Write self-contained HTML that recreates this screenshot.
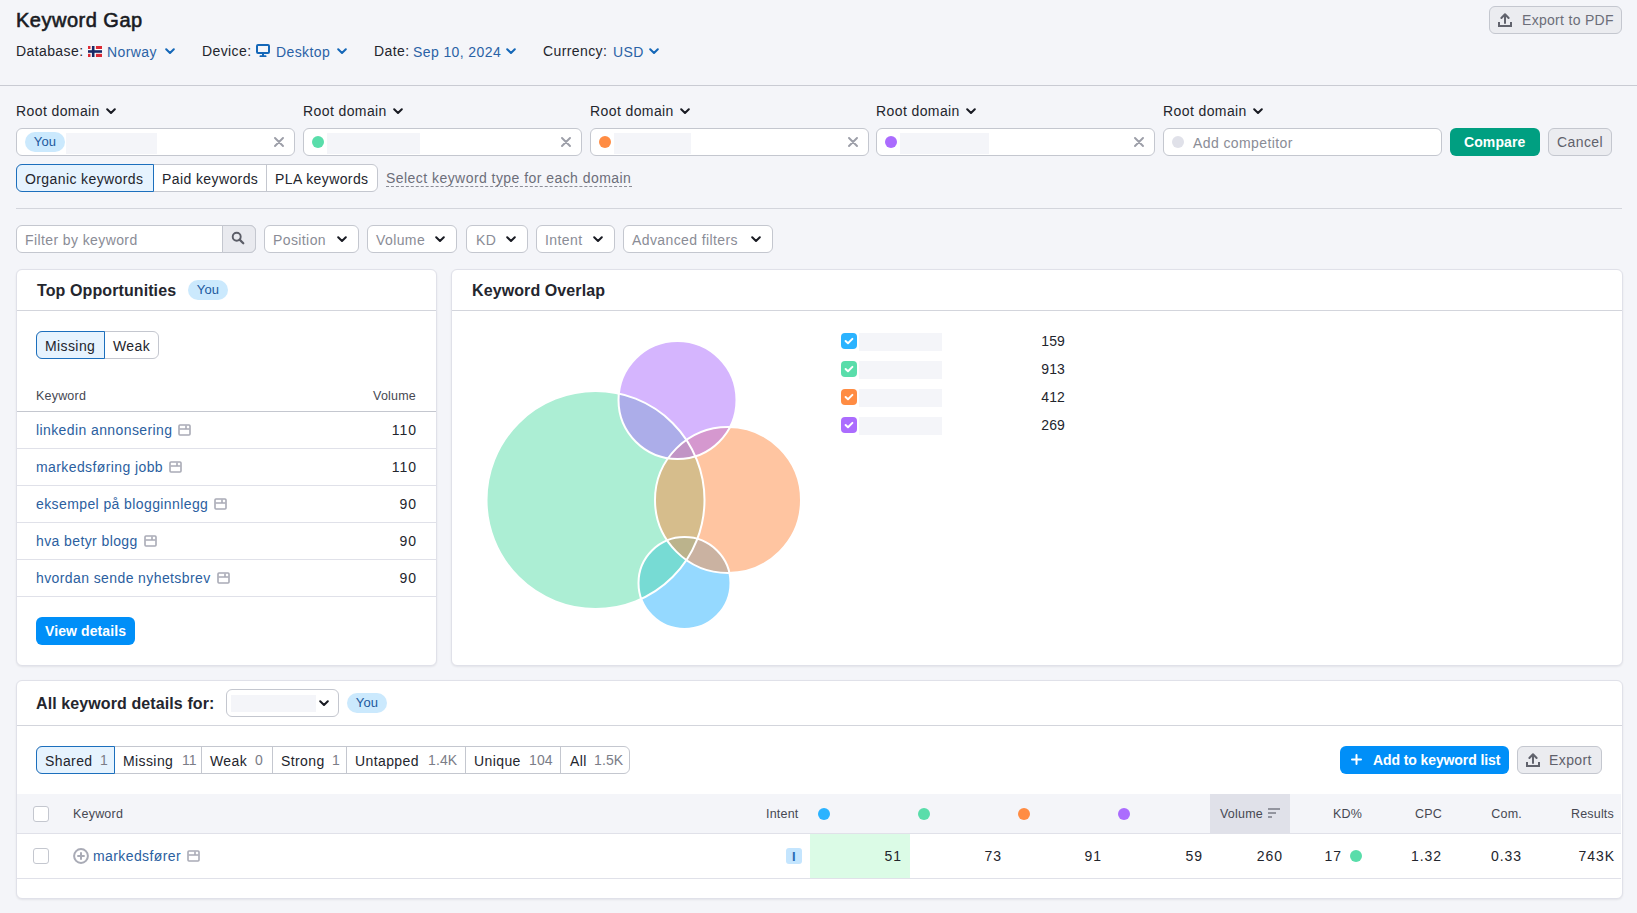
<!DOCTYPE html>
<html><head><meta charset="utf-8">
<style>
*{box-sizing:border-box;margin:0;padding:0}
html,body{width:1637px;height:913px;overflow:hidden;background:#f4f5f9;font-family:"Liberation Sans",sans-serif;color:#23252d;font-size:14px}
.a{position:absolute;white-space:nowrap}
.t14{font-size:14px;line-height:20px;letter-spacing:0.4px}
.lnk{color:#2b62a6}
.title{left:16px;top:7px;font-size:20px;font-weight:normal;-webkit-text-stroke:0.6px #191b23;letter-spacing:0.5px;line-height:26px;color:#191b23}
.hr{height:1px;background:#c9cbd3}
.inp{height:28px;width:279px;background:#fff;border:1px solid #c4c7cf;border-radius:6px}
.badge{height:20px;width:40px;border-radius:10px;background:#cbe9fd;color:#21599e;font-size:13px;line-height:20px;text-align:center;letter-spacing:0.2px}
.gbar{background:#f4f5f9}
.dot{width:12px;height:12px;border-radius:50%}
.card{background:#fff;border:1px solid #e0e1e9;border-radius:6px;box-shadow:0 1px 2px rgba(25,27,35,0.08)}
.fbox{height:28px;background:#fff;border:1px solid #c4c7cf;border-radius:6px}
.ph{color:#8a8c96}
.sec{color:#6c6e79}
.hdr{font-size:16px;font-weight:bold;line-height:20px;letter-spacing:0.1px;color:#24262e}
.kw{color:#2b60a0}
.num{text-align:right;letter-spacing:0.9px!important;margin-right:-0.9px}
.th{font-size:12.5px;line-height:16px;color:#464852;letter-spacing:0.2px}
</style></head>
<body>

<div class="a title">Keyword Gap</div>
<div class="a t14" style="left:16px;top:41px;">Database:</div>
<svg class="a" style="left:88px;top:46px" width="14" height="11" viewBox="0 0 14 11"><rect width="14" height="11" fill="#dc2a35"/><rect x="2.5" width="5.4" height="11" fill="#fff"/><rect y="3" width="14" height="4.8" fill="#fff"/><rect x="3.9" width="2.6" height="11" fill="#1a2a66"/><rect y="4.2" width="14" height="2.6" fill="#1a2a66"/></svg>
<div class="a t14 lnk" style="left:107px;top:42px;">Norway</div>
<svg class="a" style="left:165px;top:48px" width="10" height="7" viewBox="0 0 10 7"><path d="M1.2 1.2 L5 5 L8.8 1.2" fill="none" stroke="#1467b8" stroke-width="2" stroke-linecap="round" stroke-linejoin="round"/></svg>
<div class="a t14" style="left:202px;top:41px;">Device:</div>
<svg class="a" style="left:256px;top:44px" width="14" height="13" viewBox="0 0 14 13"><rect x="1" y="1" width="12" height="8" rx="1" fill="none" stroke="#1467b8" stroke-width="2"/><rect x="6" y="9" width="2" height="3.5" fill="#1467b8"/><rect x="3.5" y="11.3" width="7" height="1.9" rx="0.9" fill="#1467b8"/></svg>
<div class="a t14 lnk" style="left:276px;top:42px;">Desktop</div>
<svg class="a" style="left:337px;top:48px" width="10" height="7" viewBox="0 0 10 7"><path d="M1.2 1.2 L5 5 L8.8 1.2" fill="none" stroke="#1467b8" stroke-width="2" stroke-linecap="round" stroke-linejoin="round"/></svg>
<div class="a t14" style="left:374px;top:41px;">Date:</div>
<div class="a t14 lnk" style="left:413px;top:42px;">Sep 10, 2024</div>
<svg class="a" style="left:506px;top:48px" width="10" height="7" viewBox="0 0 10 7"><path d="M1.2 1.2 L5 5 L8.8 1.2" fill="none" stroke="#1467b8" stroke-width="2" stroke-linecap="round" stroke-linejoin="round"/></svg>
<div class="a t14" style="left:543px;top:41px;">Currency:</div>
<div class="a t14 lnk" style="left:613px;top:42px;">USD</div>
<svg class="a" style="left:649px;top:48px" width="10" height="7" viewBox="0 0 10 7"><path d="M1.2 1.2 L5 5 L8.8 1.2" fill="none" stroke="#1467b8" stroke-width="2" stroke-linecap="round" stroke-linejoin="round"/></svg>
<div class="a" style="left:1489px;top:6px;width:133px;height:28px;border:1px solid #c4c7cf;border-radius:6px;background:#ebecf0"></div>
<svg class="a" style="left:1498px;top:13px" width="14" height="14" viewBox="0 0 14 14"><path d="M7 10 V1.6 M3.4 5 L7 1.3 L10.6 5" fill="none" stroke="#61636d" stroke-width="2" stroke-linecap="round" stroke-linejoin="round"/><path d="M1 9 V13 H13 V9" fill="none" stroke="#61636d" stroke-width="2"/></svg>
<div class="a t14 sec" style="left:1522px;top:10px;letter-spacing:0.3px">Export to PDF</div>
<div class="a" style="left:0px;top:85px;width:1637px;height:1px;background:#c9cbd3"></div>
<div class="a t14" style="left:16px;top:101px;">Root domain</div>
<svg class="a" style="left:106px;top:108px" width="10" height="7" viewBox="0 0 10 7"><path d="M1.2 1.2 L5 5 L8.8 1.2" fill="none" stroke="#191b23" stroke-width="2" stroke-linecap="round" stroke-linejoin="round"/></svg>
<div class="a" style="left:16px;top:128px;width:279px;height:28px;background:#fff;border:1px solid #c4c7cf;border-radius:6px"></div>
<div class="a badge" style="left:25px;top:132px">You</div>
<div class="a" style="left:66px;top:133px;width:91px;height:21px;background:#f4f5f9"></div>
<svg class="a" style="left:274px;top:137px" width="10" height="10" viewBox="0 0 10 10"><path d="M1 1 L9 9 M9 1 L1 9" stroke="#9c9ea8" stroke-width="1.9" stroke-linecap="round"/></svg>
<div class="a t14" style="left:303px;top:101px;">Root domain</div>
<svg class="a" style="left:393px;top:108px" width="10" height="7" viewBox="0 0 10 7"><path d="M1.2 1.2 L5 5 L8.8 1.2" fill="none" stroke="#191b23" stroke-width="2" stroke-linecap="round" stroke-linejoin="round"/></svg>
<div class="a" style="left:303px;top:128px;width:279px;height:28px;background:#fff;border:1px solid #c4c7cf;border-radius:6px"></div>
<div class="a" style="left:312px;top:136px;width:12px;height:12px;border-radius:50%;background:#59ddaa"></div>
<div class="a" style="left:327px;top:133px;width:93px;height:21px;background:#f4f5f9"></div>
<svg class="a" style="left:561px;top:137px" width="10" height="10" viewBox="0 0 10 10"><path d="M1 1 L9 9 M9 1 L1 9" stroke="#9c9ea8" stroke-width="1.9" stroke-linecap="round"/></svg>
<div class="a t14" style="left:590px;top:101px;">Root domain</div>
<svg class="a" style="left:680px;top:108px" width="10" height="7" viewBox="0 0 10 7"><path d="M1.2 1.2 L5 5 L8.8 1.2" fill="none" stroke="#191b23" stroke-width="2" stroke-linecap="round" stroke-linejoin="round"/></svg>
<div class="a" style="left:590px;top:128px;width:279px;height:28px;background:#fff;border:1px solid #c4c7cf;border-radius:6px"></div>
<div class="a" style="left:599px;top:136px;width:12px;height:12px;border-radius:50%;background:#ff8c43"></div>
<div class="a" style="left:614px;top:133px;width:77px;height:21px;background:#f4f5f9"></div>
<svg class="a" style="left:848px;top:137px" width="10" height="10" viewBox="0 0 10 10"><path d="M1 1 L9 9 M9 1 L1 9" stroke="#9c9ea8" stroke-width="1.9" stroke-linecap="round"/></svg>
<div class="a t14" style="left:876px;top:101px;">Root domain</div>
<svg class="a" style="left:966px;top:108px" width="10" height="7" viewBox="0 0 10 7"><path d="M1.2 1.2 L5 5 L8.8 1.2" fill="none" stroke="#191b23" stroke-width="2" stroke-linecap="round" stroke-linejoin="round"/></svg>
<div class="a" style="left:876px;top:128px;width:279px;height:28px;background:#fff;border:1px solid #c4c7cf;border-radius:6px"></div>
<div class="a" style="left:885px;top:136px;width:12px;height:12px;border-radius:50%;background:#ab6cfe"></div>
<div class="a" style="left:900px;top:133px;width:89px;height:21px;background:#f4f5f9"></div>
<svg class="a" style="left:1134px;top:137px" width="10" height="10" viewBox="0 0 10 10"><path d="M1 1 L9 9 M9 1 L1 9" stroke="#9c9ea8" stroke-width="1.9" stroke-linecap="round"/></svg>
<div class="a t14" style="left:1163px;top:101px;">Root domain</div>
<svg class="a" style="left:1253px;top:108px" width="10" height="7" viewBox="0 0 10 7"><path d="M1.2 1.2 L5 5 L8.8 1.2" fill="none" stroke="#191b23" stroke-width="2" stroke-linecap="round" stroke-linejoin="round"/></svg>
<div class="a" style="left:1163px;top:128px;width:279px;height:28px;background:#fff;border:1px solid #c4c7cf;border-radius:6px"></div>
<div class="a" style="left:1172px;top:136px;width:12px;height:12px;border-radius:50%;background:#e0e1e9"></div>
<div class="a t14 ph" style="left:1193px;top:133px;">Add competitor</div>
<div class="a" style="left:1450px;top:128px;width:90px;height:28px;background:#009f81;border-radius:6px"></div>
<div class="a t14" style="left:1464px;top:132px;color:#fff;font-weight:bold;letter-spacing:0.1px">Compare</div>
<div class="a" style="left:1548px;top:128px;width:64px;height:28px;background:#ebecf0;border:1px solid #c4c7cf;border-radius:6px"></div>
<div class="a t14 sec" style="left:1557px;top:132px;color:#5f616b">Cancel</div>
<div class="a" style="left:16px;top:164px;width:362px;height:28px;background:#fff;border:1px solid #c4c7cf;border-radius:6px"></div>
<div class="a" style="left:16px;top:164px;width:138px;height:28px;background:#e6f3fe;border:1px solid #1c6fbd;border-radius:6px 0 0 6px"></div>
<div class="a" style="left:266px;top:165px;width:1px;height:26px;background:#c4c7cf"></div>
<div class="a t14" style="left:25px;top:169px;">Organic keywords</div>
<div class="a t14" style="left:162px;top:169px;">Paid keywords</div>
<div class="a t14" style="left:275px;top:169px;">PLA keywords</div>
<div class="a t14 sec" style="left:386px;top:168px;letter-spacing:0.45px">Select keyword type for each domain</div>
<div class="a" style="left:386px;top:186px;width:246px;height:1px;border-top:1px dashed #8a8c96"></div>
<div class="a" style="left:16px;top:208px;width:1606px;height:1px;background:#d3d5dc"></div>
<div class="a" style="left:16px;top:225px;width:240px;height:28px;background:#fff;border:1px solid #c4c7cf;border-radius:6px"></div>
<div class="a" style="left:222px;top:225px;width:34px;height:28px;background:#e9eaef;border:1px solid #c4c7cf;border-radius:0 6px 6px 0"></div>
<svg class="a" style="left:231px;top:231px" width="14" height="14" viewBox="0 0 14 14"><circle cx="5.7" cy="5.7" r="4" fill="none" stroke="#5b5d67" stroke-width="1.9"/><path d="M8.6 8.6 L12.3 12.3" stroke="#5b5d67" stroke-width="2.2" stroke-linecap="round"/></svg>
<div class="a t14 ph" style="left:25px;top:230px;">Filter by keyword</div>
<div class="a" style="left:264px;top:225px;width:95px;height:28px;background:#fff;border:1px solid #c4c7cf;border-radius:6px"></div>
<div class="a t14 ph" style="left:273px;top:230px;">Position</div>
<svg class="a" style="left:337px;top:236px" width="10" height="7" viewBox="0 0 10 7"><path d="M1.2 1.2 L5 5 L8.8 1.2" fill="none" stroke="#191b23" stroke-width="2" stroke-linecap="round" stroke-linejoin="round"/></svg>
<div class="a" style="left:367px;top:225px;width:90px;height:28px;background:#fff;border:1px solid #c4c7cf;border-radius:6px"></div>
<div class="a t14 ph" style="left:376px;top:230px;">Volume</div>
<svg class="a" style="left:435px;top:236px" width="10" height="7" viewBox="0 0 10 7"><path d="M1.2 1.2 L5 5 L8.8 1.2" fill="none" stroke="#191b23" stroke-width="2" stroke-linecap="round" stroke-linejoin="round"/></svg>
<div class="a" style="left:466px;top:225px;width:62px;height:28px;background:#fff;border:1px solid #c4c7cf;border-radius:6px"></div>
<div class="a t14 ph" style="left:476px;top:230px;">KD</div>
<svg class="a" style="left:506px;top:236px" width="10" height="7" viewBox="0 0 10 7"><path d="M1.2 1.2 L5 5 L8.8 1.2" fill="none" stroke="#191b23" stroke-width="2" stroke-linecap="round" stroke-linejoin="round"/></svg>
<div class="a" style="left:536px;top:225px;width:79px;height:28px;background:#fff;border:1px solid #c4c7cf;border-radius:6px"></div>
<div class="a t14 ph" style="left:545px;top:230px;">Intent</div>
<svg class="a" style="left:593px;top:236px" width="10" height="7" viewBox="0 0 10 7"><path d="M1.2 1.2 L5 5 L8.8 1.2" fill="none" stroke="#191b23" stroke-width="2" stroke-linecap="round" stroke-linejoin="round"/></svg>
<div class="a" style="left:623px;top:225px;width:150px;height:28px;background:#fff;border:1px solid #c4c7cf;border-radius:6px"></div>
<div class="a t14 ph" style="left:632px;top:230px;">Advanced filters</div>
<svg class="a" style="left:751px;top:236px" width="10" height="7" viewBox="0 0 10 7"><path d="M1.2 1.2 L5 5 L8.8 1.2" fill="none" stroke="#191b23" stroke-width="2" stroke-linecap="round" stroke-linejoin="round"/></svg>
<div class="a" style="left:16px;top:269px;width:421px;height:397px;background:#fff;border:1px solid #e0e1e9;border-radius:6px;box-shadow:0 1px 2px rgba(25,27,35,0.08)"></div>
<div class="a hdr" style="left:37px;top:281px;">Top Opportunities</div>
<div class="a badge" style="left:188px;top:280px">You</div>
<div class="a" style="left:17px;top:310px;width:419px;height:1px;background:#d3d5dc"></div>
<div class="a" style="left:36px;top:331px;width:123px;height:28px;background:#fff;border:1px solid #c4c7cf;border-radius:6px"></div>
<div class="a" style="left:36px;top:331px;width:69px;height:28px;background:#e6f3fe;border:1px solid #1c6fbd;border-radius:6px 0 0 6px"></div>
<div class="a t14" style="left:45px;top:336px;">Missing</div>
<div class="a t14" style="left:113px;top:336px;">Weak</div>
<div class="a th" style="left:36px;top:388px;">Keyword</div>
<div class="a th" style="right:1221px;top:388px;">Volume</div>
<div class="a" style="left:17px;top:411px;width:419px;height:1px;background:#c4c7cf"></div>
<div class="a t14 kw" style="left:36px;top:420px;">linkedin annonsering<svg style="vertical-align:-1px;margin-left:6px" width="13" height="12" viewBox="0 0 13 12"><rect x="1" y="1" width="11" height="10" rx="1" fill="none" stroke="#a9abb6" stroke-width="1.6"/><path d="M1.5 5 H11.5 M8 1.5 V5" stroke="#a9abb6" stroke-width="1.6"/></svg></div>
<div class="a t14 num" style="right:1221px;top:420px;">110</div>
<div class="a" style="left:17px;top:448px;width:419px;height:1px;background:#e0e1e9"></div>
<div class="a t14 kw" style="left:36px;top:457px;">markedsføring jobb<svg style="vertical-align:-1px;margin-left:6px" width="13" height="12" viewBox="0 0 13 12"><rect x="1" y="1" width="11" height="10" rx="1" fill="none" stroke="#a9abb6" stroke-width="1.6"/><path d="M1.5 5 H11.5 M8 1.5 V5" stroke="#a9abb6" stroke-width="1.6"/></svg></div>
<div class="a t14 num" style="right:1221px;top:457px;">110</div>
<div class="a" style="left:17px;top:485px;width:419px;height:1px;background:#e0e1e9"></div>
<div class="a t14 kw" style="left:36px;top:494px;">eksempel på blogginnlegg<svg style="vertical-align:-1px;margin-left:6px" width="13" height="12" viewBox="0 0 13 12"><rect x="1" y="1" width="11" height="10" rx="1" fill="none" stroke="#a9abb6" stroke-width="1.6"/><path d="M1.5 5 H11.5 M8 1.5 V5" stroke="#a9abb6" stroke-width="1.6"/></svg></div>
<div class="a t14 num" style="right:1221px;top:494px;">90</div>
<div class="a" style="left:17px;top:522px;width:419px;height:1px;background:#e0e1e9"></div>
<div class="a t14 kw" style="left:36px;top:531px;">hva betyr blogg<svg style="vertical-align:-1px;margin-left:6px" width="13" height="12" viewBox="0 0 13 12"><rect x="1" y="1" width="11" height="10" rx="1" fill="none" stroke="#a9abb6" stroke-width="1.6"/><path d="M1.5 5 H11.5 M8 1.5 V5" stroke="#a9abb6" stroke-width="1.6"/></svg></div>
<div class="a t14 num" style="right:1221px;top:531px;">90</div>
<div class="a" style="left:17px;top:559px;width:419px;height:1px;background:#e0e1e9"></div>
<div class="a t14 kw" style="left:36px;top:568px;">hvordan sende nyhetsbrev<svg style="vertical-align:-1px;margin-left:6px" width="13" height="12" viewBox="0 0 13 12"><rect x="1" y="1" width="11" height="10" rx="1" fill="none" stroke="#a9abb6" stroke-width="1.6"/><path d="M1.5 5 H11.5 M8 1.5 V5" stroke="#a9abb6" stroke-width="1.6"/></svg></div>
<div class="a t14 num" style="right:1221px;top:568px;">90</div>
<div class="a" style="left:17px;top:596px;width:419px;height:1px;background:#e0e1e9"></div>
<div class="a" style="left:36px;top:617px;width:99px;height:28px;background:#008ff8;border-radius:6px"></div>
<div class="a t14" style="left:45px;top:621px;color:#fff;font-weight:bold;letter-spacing:0.1px">View details</div>
<div class="a" style="left:451px;top:269px;width:1172px;height:397px;background:#fff;border:1px solid #e0e1e9;border-radius:6px;box-shadow:0 1px 2px rgba(25,27,35,0.08)"></div>
<div class="a hdr" style="left:472px;top:281px;">Keyword Overlap</div>
<div class="a" style="left:452px;top:310px;width:1170px;height:1px;background:#d3d5dc"></div>
<svg class="a" style="left:452px;top:311px" width="400" height="340" viewBox="452 311 400 340">
<g fill-opacity="0.5">
<circle cx="684.5" cy="583" r="46" fill="#2bb3ff"/>
<circle cx="595.5" cy="500" r="109" fill="#59ddaa"/>
<circle cx="728" cy="500" r="73" fill="#ff8c43"/>
<circle cx="677.5" cy="400" r="59" fill="#ab6cfe"/>
</g><g fill="none" stroke="#fff" stroke-width="2">
<circle cx="684.5" cy="583" r="46"/>
<circle cx="595.5" cy="500" r="109"/>
<circle cx="728" cy="500" r="73"/>
<circle cx="677.5" cy="400" r="59"/>
</g></svg>
<div class="a" style="left:841px;top:333px;width:16px;height:16px;background:#2bb3ff;border-radius:4px"></div>
<svg class="a" style="left:841px;top:333px" width="16" height="16" viewBox="0 0 16 16"><path d="M4.6 8 L7 10.3 L11.4 5.9" fill="none" stroke="#fff" stroke-width="2" stroke-linecap="round" stroke-linejoin="round"/></svg>
<div class="a" style="left:859px;top:333px;width:83px;height:18px;background:#f4f5f9"></div>
<div class="a t14" style="right:572px;top:331px;letter-spacing:0.1px">159</div>
<div class="a" style="left:841px;top:361px;width:16px;height:16px;background:#59ddaa;border-radius:4px"></div>
<svg class="a" style="left:841px;top:361px" width="16" height="16" viewBox="0 0 16 16"><path d="M4.6 8 L7 10.3 L11.4 5.9" fill="none" stroke="#fff" stroke-width="2" stroke-linecap="round" stroke-linejoin="round"/></svg>
<div class="a" style="left:859px;top:361px;width:83px;height:18px;background:#f4f5f9"></div>
<div class="a t14" style="right:572px;top:359px;letter-spacing:0.1px">913</div>
<div class="a" style="left:841px;top:389px;width:16px;height:16px;background:#ff8c43;border-radius:4px"></div>
<svg class="a" style="left:841px;top:389px" width="16" height="16" viewBox="0 0 16 16"><path d="M4.6 8 L7 10.3 L11.4 5.9" fill="none" stroke="#fff" stroke-width="2" stroke-linecap="round" stroke-linejoin="round"/></svg>
<div class="a" style="left:859px;top:389px;width:83px;height:18px;background:#f4f5f9"></div>
<div class="a t14" style="right:572px;top:387px;letter-spacing:0.1px">412</div>
<div class="a" style="left:841px;top:417px;width:16px;height:16px;background:#ab6cfe;border-radius:4px"></div>
<svg class="a" style="left:841px;top:417px" width="16" height="16" viewBox="0 0 16 16"><path d="M4.6 8 L7 10.3 L11.4 5.9" fill="none" stroke="#fff" stroke-width="2" stroke-linecap="round" stroke-linejoin="round"/></svg>
<div class="a" style="left:859px;top:417px;width:83px;height:18px;background:#f4f5f9"></div>
<div class="a t14" style="right:572px;top:415px;letter-spacing:0.1px">269</div>
<div class="a" style="left:16px;top:680px;width:1607px;height:219px;background:#fff;border:1px solid #e0e1e9;border-radius:6px;box-shadow:0 1px 2px rgba(25,27,35,0.08)"></div>
<div class="a hdr" style="left:36px;top:694px;">All keyword details for:</div>
<div class="a" style="left:226px;top:689px;width:113px;height:28px;background:#fff;border:1px solid #c4c7cf;border-radius:6px"></div>
<div class="a" style="left:231px;top:695px;width:85px;height:17px;background:#f4f5f9"></div>
<svg class="a" style="left:319px;top:700px" width="10" height="7" viewBox="0 0 10 7"><path d="M1.2 1.2 L5 5 L8.8 1.2" fill="none" stroke="#191b23" stroke-width="2" stroke-linecap="round" stroke-linejoin="round"/></svg>
<div class="a badge" style="left:347px;top:693px">You</div>
<div class="a" style="left:17px;top:725px;width:1605px;height:1px;background:#d3d5dc"></div>
<div class="a" style="left:36px;top:746px;width:594px;height:28px;background:#fff;border:1px solid #c4c7cf;border-radius:6px"></div>
<div class="a" style="left:36px;top:746px;width:79px;height:28px;background:#e6f3fe;border:1px solid #1c6fbd;border-radius:6px 0 0 6px"></div>
<div class="a t14" style="left:45px;top:751px;">Shared</div>
<div class="a t14 sec" style="left:100px;top:750px;letter-spacing:0.1px;color:#7b7d87">1</div>
<div class="a t14" style="left:123px;top:751px;">Missing</div>
<div class="a t14 sec" style="left:182px;top:750px;letter-spacing:0.1px;color:#7b7d87">11</div>
<div class="a" style="left:201px;top:747px;width:1px;height:26px;background:#c4c7cf"></div>
<div class="a t14" style="left:210px;top:751px;">Weak</div>
<div class="a t14 sec" style="left:255px;top:750px;letter-spacing:0.1px;color:#7b7d87">0</div>
<div class="a" style="left:272px;top:747px;width:1px;height:26px;background:#c4c7cf"></div>
<div class="a t14" style="left:281px;top:751px;">Strong</div>
<div class="a t14 sec" style="left:332px;top:750px;letter-spacing:0.1px;color:#7b7d87">1</div>
<div class="a" style="left:346px;top:747px;width:1px;height:26px;background:#c4c7cf"></div>
<div class="a t14" style="left:355px;top:751px;">Untapped</div>
<div class="a t14 sec" style="left:428px;top:750px;letter-spacing:0.1px;color:#7b7d87">1.4K</div>
<div class="a" style="left:465px;top:747px;width:1px;height:26px;background:#c4c7cf"></div>
<div class="a t14" style="left:474px;top:751px;">Unique</div>
<div class="a t14 sec" style="left:529px;top:750px;letter-spacing:0.1px;color:#7b7d87">104</div>
<div class="a" style="left:560px;top:747px;width:1px;height:26px;background:#c4c7cf"></div>
<div class="a t14" style="left:570px;top:751px;">All</div>
<div class="a t14 sec" style="left:594px;top:750px;letter-spacing:0.1px;color:#7b7d87">1.5K</div>
<div class="a" style="left:1340px;top:746px;width:169px;height:28px;background:#008ff8;border-radius:6px"></div>
<svg class="a" style="left:1351px;top:754px" width="11" height="11" viewBox="0 0 11 11"><path d="M5.5 1 V10 M1 5.5 H10" stroke="#fff" stroke-width="2" stroke-linecap="round"/></svg>
<div class="a t14" style="left:1373px;top:750px;color:#fff;font-weight:bold;letter-spacing:-0.1px">Add to keyword list</div>
<div class="a" style="left:1517px;top:746px;width:85px;height:28px;background:#ebecf0;border:1px solid #c4c7cf;border-radius:6px"></div>
<svg class="a" style="left:1526px;top:753px" width="14" height="14" viewBox="0 0 14 14"><path d="M7 10 V1.6 M3.4 5 L7 1.3 L10.6 5" fill="none" stroke="#61636d" stroke-width="2" stroke-linecap="round" stroke-linejoin="round"/><path d="M1 9 V13 H13 V9" fill="none" stroke="#61636d" stroke-width="2"/></svg>
<div class="a t14 sec" style="left:1549px;top:750px;color:#5f616b">Export</div>
<div class="a" style="left:17px;top:794px;width:1604px;height:39px;background:#f4f5f9"></div>
<div class="a" style="left:1210px;top:794px;width:80px;height:39px;background:#e0e1e9"></div>
<div class="a" style="left:17px;top:833px;width:1604px;height:1px;background:#e0e1e9"></div>
<div class="a" style="left:33px;top:806px;width:16px;height:16px;background:#fff;border:1px solid #c4c7cf;border-radius:3px"></div>
<div class="a th" style="left:73px;top:806px;">Keyword</div>
<div class="a th" style="left:766px;top:806px;">Intent</div>
<div class="a" style="left:818px;top:808px;width:12px;height:12px;border-radius:50%;background:#2bb3ff"></div>
<div class="a" style="left:918px;top:808px;width:12px;height:12px;border-radius:50%;background:#59ddaa"></div>
<div class="a" style="left:1018px;top:808px;width:12px;height:12px;border-radius:50%;background:#ff8c43"></div>
<div class="a" style="left:1118px;top:808px;width:12px;height:12px;border-radius:50%;background:#ab6cfe"></div>
<div class="a th" style="left:1220px;top:806px;">Volume</div>
<svg class="a" style="left:1268px;top:808px" width="13" height="11" viewBox="0 0 13 11"><path d="M0 1 H12 M0 5 H8 M0 9 H4" stroke="#7a7c86" stroke-width="1.7"/></svg>
<div class="a th" style="right:275px;top:806px;">KD%</div>
<div class="a th" style="right:195px;top:806px;">CPC</div>
<div class="a th" style="right:115px;top:806px;">Com.</div>
<div class="a th" style="right:23px;top:806px;">Results</div>
<div class="a" style="left:810px;top:834px;width:100px;height:44px;background:#dbfbe6"></div>
<div class="a" style="left:33px;top:848px;width:16px;height:16px;background:#fff;border:1px solid #c4c7cf;border-radius:3px"></div>
<svg class="a" style="left:73px;top:848px" width="16" height="16" viewBox="0 0 16 16"><circle cx="8" cy="8" r="6.9" fill="none" stroke="#a9abb6" stroke-width="2"/><path d="M8 4.3 V11.7 M4.3 8 H11.7" stroke="#a9abb6" stroke-width="2"/></svg>
<div class="a t14 kw" style="left:93px;top:846px;">markedsfører<svg style="vertical-align:-1px;margin-left:6px" width="13" height="12" viewBox="0 0 13 12"><rect x="1" y="1" width="11" height="10" rx="1" fill="none" stroke="#a9abb6" stroke-width="1.6"/><path d="M1.5 5 H11.5 M8 1.5 V5" stroke="#a9abb6" stroke-width="1.6"/></svg></div>
<div class="a" style="left:786px;top:848px;width:16px;height:16px;background:#c4e5fe;border-radius:3px"></div>
<div class="a t14" style="left:792px;top:847px;color:#2a6cb5;font-size:13px;font-weight:bold">I</div>
<div class="a t14 num" style="right:736px;top:846px;">51</div>
<div class="a t14 num" style="right:636px;top:846px;">73</div>
<div class="a t14 num" style="right:536px;top:846px;">91</div>
<div class="a t14 num" style="right:435px;top:846px;">59</div>
<div class="a t14 num" style="right:355px;top:846px;">260</div>
<div class="a t14 num" style="right:296px;top:846px;">17</div>
<div class="a t14 num" style="right:196px;top:846px;">1.32</div>
<div class="a t14 num" style="right:116px;top:846px;">0.33</div>
<div class="a t14 num" style="right:23px;top:846px;">743K</div>
<div class="a" style="left:1350px;top:850px;width:12px;height:12px;border-radius:50%;background:#59ddaa"></div>
<div class="a" style="left:17px;top:878px;width:1604px;height:1px;background:#e0e1e9"></div>

</body></html>
